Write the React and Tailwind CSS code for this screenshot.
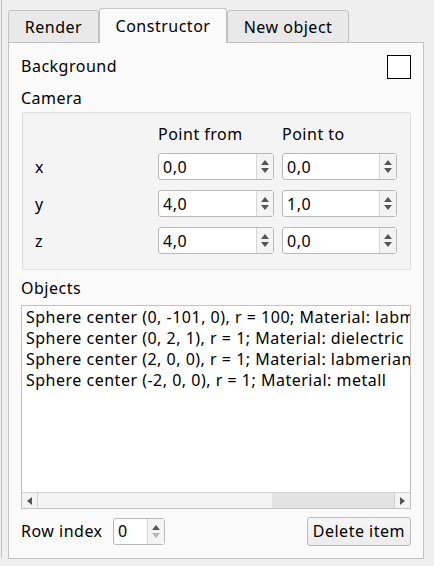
const font = { fontFamily: '"Noto Sans", "Open Sans", sans-serif' };

const SpinBox = ({ value, width = "w-[116px]", downDisabled = false }) => (
  <div className={`flex h-[27px] ${width} rounded-[3px] border border-[#b9b9b9] bg-white`}>
    <div className="flex flex-1 items-center pl-[4px] text-[16px] text-black">{value}</div>
    <div className="flex w-[17px] flex-col items-center justify-center gap-[3px] border-l border-[#d6d6d6] bg-[#f4f4f4]">
      <svg width="8" height="5" viewBox="0 0 8 5">
        <path d="M0 5 L4 0 L8 5 Z" fill="#555" />
      </svg>
      <svg width="8" height="5" viewBox="0 0 8 5">
        <path d="M0 0 L4 5 L8 0 Z" fill={downDisabled ? "#b4b4b4" : "#555"} />
      </svg>
    </div>
  </div>
);

const objects = [
  "Sphere center (0, -101, 0), r = 100; Material: labmerian",
  "Sphere center (0, 2, 1), r = 1; Material: dielectric",
  "Sphere center (2, 0, 0), r = 1; Material: labmerian",
  "Sphere center (-2, 0, 0), r = 1; Material: metall",
];

const camera = [
  ["x", "0,0", "0,0"],
  ["y", "4,0", "1,0"],
  ["z", "4,0", "0,0"],
];

export default function App() {
  return (
    <div
      className="flex h-[566px] w-[434px] overflow-hidden bg-[#efefef] tracking-[0.5px] text-black"
      style={font}
    >
      <div className="ml-[1px] h-[558px] w-px bg-[#c4c4c4]" />
      <div className="ml-[6px] flex w-[416px] flex-col">
        {/* tabs */}
        <div className="flex h-[42px] items-end">
          <div className="-mb-px flex h-[33px] w-[91px] items-center justify-center rounded-t-[3px] border border-[#c2c2c2] bg-[#e9e9e9] text-[16px]">
            Render
          </div>
          <div className="relative z-10 -mb-px flex h-[35px] w-[128px] items-center justify-center rounded-t-[3px] border border-b-0 border-[#c2c2c2] bg-[#fafafa] text-[16px]">
            Constructor
          </div>
          <div className="-mb-px flex h-[33px] w-[122px] items-center justify-center rounded-t-[3px] border border-[#c2c2c2] bg-[#e9e9e9] text-[16px]">
            New object
          </div>
        </div>

        {/* panel */}
        <div className="flex h-[517px] flex-col border border-[#c2c2c2] bg-[#fafafa] px-[12px] text-[16px]">
          <div className="mt-[11px] flex h-[24px] items-center justify-between">
            <span>Background</span>
            <div className="mt-[1px] h-[24px] w-[24px] border border-black bg-white" />
          </div>

          <div className="mt-[10px] flex h-[20px] items-center">Camera</div>

          <div className="ml-px mt-[4px] flex h-[158px] flex-col rounded-[2px] border border-[#dedede] bg-[#f4f4f4]">
            <div className="mt-[11px] flex h-[20px] items-center">
              <span className="ml-[135px] w-[124px]">Point from</span>
              <span>Point to</span>
            </div>
            <div className="mt-[9px] flex flex-col gap-[10px]">
              {camera.map(([axis, from, to]) => (
                <div key={axis} className="flex items-center">
                  <span className="ml-[12px] w-[123px]">{axis}</span>
                  <SpinBox value={from} />
                  <div className="w-[8px]" />
                  <SpinBox value={to} width="w-[115px]" />
                </div>
              ))}
            </div>
          </div>

          <div className="mt-[8px] flex h-[20px] items-center">Objects</div>

          <div className="mt-[7px] flex h-[204px] flex-col border border-[#c2c2c2] bg-white">
            <div className="flex-1 overflow-hidden pl-[4px] pt-[1px]">
              {objects.map((o) => (
                <div key={o} className="h-[21px] whitespace-nowrap leading-[21px]">
                  {o}
                </div>
              ))}
            </div>
            <div className="flex h-[16px] border-t border-[#d4d4d4] bg-[#f3f3f3]">
              <div className="flex w-[16px] items-center justify-center border-r border-[#d4d4d4]">
                <svg width="5" height="8" viewBox="0 0 5 8">
                  <path d="M5 0 L0 4 L5 8 Z" fill="#555" />
                </svg>
              </div>
              <div className="flex flex-1">
                <div className="w-[234px]" />
                <div className="flex-1 bg-[#e3e3e3]" />
              </div>
              <div className="flex w-[16px] items-center justify-center border-l border-[#d4d4d4]">
                <svg width="5" height="8" viewBox="0 0 5 8">
                  <path d="M0 0 L5 4 L0 8 Z" fill="#555" />
                </svg>
              </div>
            </div>
          </div>

          <div className="mt-[8px] flex h-[28px] items-center justify-between">
            <div className="flex items-center">
              <span className="w-[92px] whitespace-nowrap">Row index</span>
              <SpinBox value="0" width="w-[52px]" downDisabled />
            </div>
            <button className="flex h-[29px] items-center rounded-[3px] border border-[#bcbcbc] bg-gradient-to-b from-[#f6f6f6] to-[#ececec] px-[5px] text-[16px] tracking-[0.5px]">
              Delete item
            </button>
          </div>
        </div>
      </div>
    </div>
  );
}
